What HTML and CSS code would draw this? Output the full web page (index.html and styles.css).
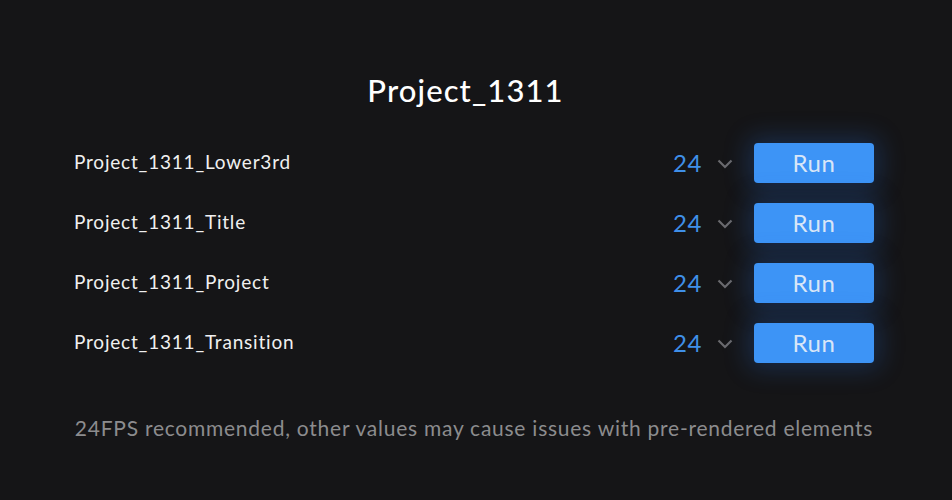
FILE: index.html
```html
<!DOCTYPE html>
<html>
<head>
<meta charset="utf-8">
<link rel="stylesheet" href="styles.css">
</head>
<body>
<main class="panel">
  <h1 class="title">Project_1311</h1>
  <ul class="list">
    <li class="row">
      <span class="name">Project_1311_Lower3rd</span>
      <span class="fps">24</span>
      <svg class="chev" viewBox="0 0 16 10" width="16" height="10"><path d="M1.5 1.5 L8 8 L14.5 1.5" fill="none" stroke="#6a6a6e" stroke-width="2.2"/></svg>
      <button class="run">Run</button>
    </li>
    <li class="row">
      <span class="name">Project_1311_Title</span>
      <span class="fps">24</span>
      <svg class="chev" viewBox="0 0 16 10" width="16" height="10"><path d="M1.5 1.5 L8 8 L14.5 1.5" fill="none" stroke="#6a6a6e" stroke-width="2.2"/></svg>
      <button class="run">Run</button>
    </li>
    <li class="row">
      <span class="name">Project_1311_Project</span>
      <span class="fps">24</span>
      <svg class="chev" viewBox="0 0 16 10" width="16" height="10"><path d="M1.5 1.5 L8 8 L14.5 1.5" fill="none" stroke="#6a6a6e" stroke-width="2.2"/></svg>
      <button class="run">Run</button>
    </li>
    <li class="row">
      <span class="name">Project_1311_Transition</span>
      <span class="fps">24</span>
      <svg class="chev" viewBox="0 0 16 10" width="16" height="10"><path d="M1.5 1.5 L8 8 L14.5 1.5" fill="none" stroke="#6a6a6e" stroke-width="2.2"/></svg>
      <button class="run">Run</button>
    </li>
  </ul>
  <p class="note">24FPS recommended, other values may cause issues with pre-rendered elements</p>
</main>
</body>
</html>
```
FILE: styles.css
```css
html, body {
  margin: 0;
  padding: 0;
  background: #151517;
  height: 100%;
}
body {
  font-family: Lato, "Noto Sans", sans-serif;
  color: #f2f2f2;
}
.panel {
  width: 800px;
  margin-left: 74px;
  padding-top: 68px;
  box-sizing: border-box;
}
.title {
  margin: 0;
  text-align: center;
  font-size: 31px;
  font-weight: 500;
  letter-spacing: 1.1px;
  line-height: 44px;
  color: #ffffff;
  padding-right: 17px;
}
.list {
  list-style: none;
  margin: 0;
  padding: 0;
  margin-top: 31px;
  display: flex;
  flex-direction: column;
  gap: 20px;
}
.row {
  display: flex;
  align-items: center;
  height: 40px;
}
.name {
  flex: 1;
  font-size: 19px;
  letter-spacing: 0.8px;
  color: #f0f0f0;
  padding-bottom: 3px;
}
.fps {
  font-size: 24px;
  letter-spacing: 0.6px;
  color: #3f8fe8;
  margin-right: 15px;
  padding-bottom: 1px;
}
.chev {
  margin-right: 21px;
  margin-top: 2px;
}
.run {
  width: 120px;
  height: 40px;
  border: none;
  border-radius: 4px;
  background: #3d94f6;
  color: #d8e6f8;
  font-family: Lato, "Noto Sans", sans-serif;
  font-size: 24px;
  letter-spacing: 0.6px;
  padding: 0 0 2px;
  box-shadow: 0 0 24px 6px rgba(40, 110, 220, 0.25);
}
.note {
  margin: 52px 0 0;
  text-align: center;
  font-size: 21px;
  letter-spacing: 0.75px;
  color: #8c8c8e;
}
```
